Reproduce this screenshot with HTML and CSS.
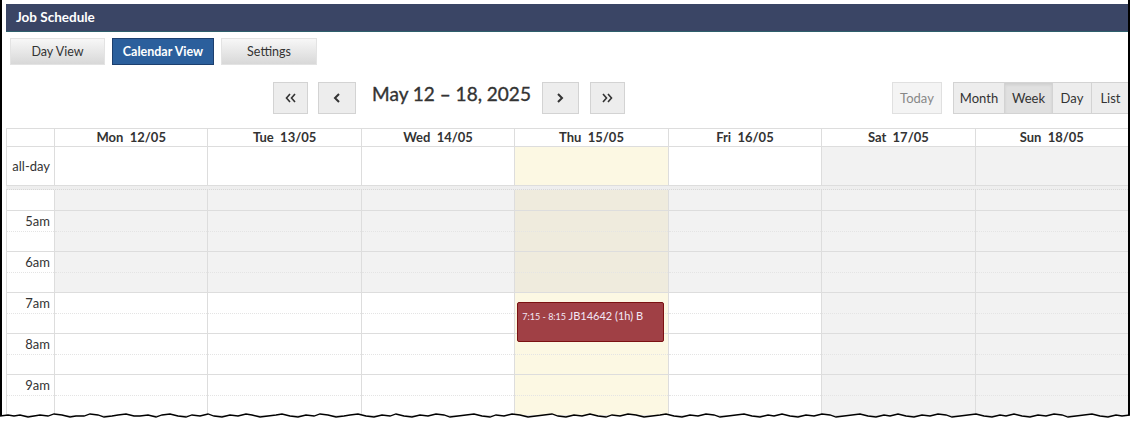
FILE: index.html
```html
<!DOCTYPE html>
<html>
<head>
<meta charset="utf-8">
<title>Job Schedule</title>
<link rel="stylesheet" href="styles.css">
</head>
<body>
<div class="frame">
  <div class="titlebar">Job Schedule</div>
  <div class="tabs">
    <div class="tab tab-day">Day View</div>
    <div class="tab tab-cal active">Calendar View</div>
    <div class="tab tab-set">Settings</div>
  </div>
  <div class="cal">
    <div class="toolbar">
      <div class="chunk"></div>
      <div class="chunk center">
        <div class="btn b-prev2"><svg width="11" height="10" viewBox="0 0 11 10"><polyline points="5,1 1.5,5 5,9" fill="none" stroke="#333" stroke-width="1.6"/><polyline points="10,1 6.5,5 10,9" fill="none" stroke="#333" stroke-width="1.6"/></svg></div>
        <div class="btn b-prev"><svg width="8" height="10" viewBox="0 0 8 10"><polyline points="6,1 2,5 6,9" fill="none" stroke="#333" stroke-width="2"/></svg></div>
        <h2 class="title">May 12 – 18, 2025</h2>
        <div class="btn b-next"><svg width="8" height="10" viewBox="0 0 8 10"><polyline points="2,1 6,5 2,9" fill="none" stroke="#333" stroke-width="2"/></svg></div>
        <div class="btn b-next2"><svg width="11" height="10" viewBox="0 0 11 10"><polyline points="1,1 4.5,5 1,9" fill="none" stroke="#333" stroke-width="1.6"/><polyline points="6,1 9.5,5 6,9" fill="none" stroke="#333" stroke-width="1.6"/></svg></div>
      </div>
      <div class="chunk right">
        <div class="btn b-today">Today</div>
        <div class="group">
          <div class="btn b-month">Month</div>
          <div class="btn b-week active">Week</div>
          <div class="btn b-dayv">Day</div>
          <div class="btn b-list">List</div>
        </div>
      </div>
    </div>

    <div class="grid">
      <div class="row head">
        <div class="cell axis"></div>
        <div class="cell hd">Mon  12/05</div>
        <div class="cell hd">Tue  13/05</div>
        <div class="cell hd">Wed  14/05</div>
        <div class="cell hd">Thu  15/05</div>
        <div class="cell hd">Fri  16/05</div>
        <div class="cell hd">Sat  17/05</div>
        <div class="cell hd">Sun  18/05</div>
      </div>
      <div class="row allday">
        <div class="cell axis ad-label">all-day</div>
        <div class="cell"></div>
        <div class="cell"></div>
        <div class="cell"></div>
        <div class="cell today"></div>
        <div class="cell"></div>
        <div class="cell weekend"></div>
        <div class="cell weekend"></div>
      </div>
      <div class="divider"></div>
      <div class="row body">
        <div class="col axis-col">
          <div class="s s0"></div>
          <div class="s sh"><span>5am</span></div>
          <div class="s sm"></div>
          <div class="s sh"><span>6am</span></div>
          <div class="s sm"></div>
          <div class="s sh"><span>7am</span></div>
          <div class="s sm"></div>
          <div class="s sh"><span>8am</span></div>
          <div class="s sm"></div>
          <div class="s sh"><span>9am</span></div>
          <div class="s sm"></div>
          <div class="s sh"></div>
        </div>
        <div class="col wd"><div class="s s0 nb"></div><div class="s sh nb"></div><div class="s sm nb"></div><div class="s sh nb"></div><div class="s sm nb"></div><div class="s sh"></div><div class="s sm"></div><div class="s sh"></div><div class="s sm"></div><div class="s sh"></div><div class="s sm"></div><div class="s sh"></div></div>
        <div class="col wd"><div class="s s0 nb"></div><div class="s sh nb"></div><div class="s sm nb"></div><div class="s sh nb"></div><div class="s sm nb"></div><div class="s sh"></div><div class="s sm"></div><div class="s sh"></div><div class="s sm"></div><div class="s sh"></div><div class="s sm"></div><div class="s sh"></div></div>
        <div class="col wd"><div class="s s0 nb"></div><div class="s sh nb"></div><div class="s sm nb"></div><div class="s sh nb"></div><div class="s sm nb"></div><div class="s sh"></div><div class="s sm"></div><div class="s sh"></div><div class="s sm"></div><div class="s sh"></div><div class="s sm"></div><div class="s sh"></div></div>
        <div class="col wd today-col"><div class="s s0 nb"></div><div class="s sh nb"></div><div class="s sm nb"></div><div class="s sh nb"></div><div class="s sm nb"></div><div class="s sh"></div><div class="s sm"></div><div class="s sh"></div><div class="s sm"></div><div class="s sh"></div><div class="s sm"></div><div class="s sh"></div>
          <div class="event"><span class="ev-time">7:15 - 8:15</span> JB14642 (1h) B</div>
        </div>
        <div class="col wd"><div class="s s0 nb"></div><div class="s sh nb"></div><div class="s sm nb"></div><div class="s sh nb"></div><div class="s sm nb"></div><div class="s sh"></div><div class="s sm"></div><div class="s sh"></div><div class="s sm"></div><div class="s sh"></div><div class="s sm"></div><div class="s sh"></div></div>
        <div class="col we"><div class="s s0"></div><div class="s sh"></div><div class="s sm"></div><div class="s sh"></div><div class="s sm"></div><div class="s sh"></div><div class="s sm"></div><div class="s sh"></div><div class="s sm"></div><div class="s sh"></div><div class="s sm"></div><div class="s sh"></div></div>
        <div class="col we"><div class="s s0"></div><div class="s sh"></div><div class="s sm"></div><div class="s sh"></div><div class="s sm"></div><div class="s sh"></div><div class="s sm"></div><div class="s sh"></div><div class="s sm"></div><div class="s sh"></div><div class="s sm"></div><div class="s sh"></div></div>
      </div>
    </div>
  </div>
</div>
<svg class="torn" width="1130" height="12" viewBox="0 0 1130 12">
  <path class="torn-fill" d="M0,6 L8,5 L14,6 L20,5 L28,7 L34,6 L40,5 L48,6 L54,4 L62,5 L70,7 L76,6 L84,6 L90,4 L98,5 L104,7 L112,6 L118,5 L126,4 L134,6 L140,6 L148,5 L156,7 L162,5 L170,4 L178,6 L186,7 L192,5 L200,6 L208,4 L214,6 L222,7 L230,5 L238,6 L246,4 L252,5 L260,7 L268,6 L276,5 L282,4 L290,6 L298,7 L306,5 L314,6 L320,4 L328,5 L336,7 L344,6 L350,5 L358,4 L366,6 L374,7 L382,5 L390,6 L396,4 L404,6 L412,7 L420,5 L428,6 L436,4 L444,5 L450,7 L458,6 L466,5 L474,4 L482,6 L490,7 L496,5 L504,6 L512,4 L520,5 L528,7 L536,6 L544,5 L552,4 L558,6 L566,7 L574,5 L582,6 L590,4 L598,6 L606,7 L612,5 L620,6 L628,4 L636,5 L644,7 L652,6 L660,5 L666,4 L674,6 L682,7 L690,5 L698,6 L706,4 L714,5 L720,7 L728,6 L736,5 L744,4 L752,6 L760,7 L768,5 L774,6 L782,4 L790,6 L798,7 L806,5 L814,6 L822,4 L830,5 L836,7 L844,6 L852,5 L860,4 L868,6 L876,7 L884,5 L890,6 L898,4 L906,6 L914,7 L922,5 L930,6 L938,4 L946,5 L952,7 L960,6 L968,5 L976,4 L984,6 L992,7 L1000,5 L1006,6 L1014,4 L1022,6 L1030,7 L1038,5 L1046,6 L1054,4 L1062,5 L1068,7 L1076,6 L1084,5 L1092,4 L1100,6 L1108,7 L1116,5 L1122,6 L1130,5 L1130,12 L0,12 Z"/>
  <path class="torn-line" d="M0,6 L8,5 L14,6 L20,5 L28,7 L34,6 L40,5 L48,6 L54,4 L62,5 L70,7 L76,6 L84,6 L90,4 L98,5 L104,7 L112,6 L118,5 L126,4 L134,6 L140,6 L148,5 L156,7 L162,5 L170,4 L178,6 L186,7 L192,5 L200,6 L208,4 L214,6 L222,7 L230,5 L238,6 L246,4 L252,5 L260,7 L268,6 L276,5 L282,4 L290,6 L298,7 L306,5 L314,6 L320,4 L328,5 L336,7 L344,6 L350,5 L358,4 L366,6 L374,7 L382,5 L390,6 L396,4 L404,6 L412,7 L420,5 L428,6 L436,4 L444,5 L450,7 L458,6 L466,5 L474,4 L482,6 L490,7 L496,5 L504,6 L512,4 L520,5 L528,7 L536,6 L544,5 L552,4 L558,6 L566,7 L574,5 L582,6 L590,4 L598,6 L606,7 L612,5 L620,6 L628,4 L636,5 L644,7 L652,6 L660,5 L666,4 L674,6 L682,7 L690,5 L698,6 L706,4 L714,5 L720,7 L728,6 L736,5 L744,4 L752,6 L760,7 L768,5 L774,6 L782,4 L790,6 L798,7 L806,5 L814,6 L822,4 L830,5 L836,7 L844,6 L852,5 L860,4 L868,6 L876,7 L884,5 L890,6 L898,4 L906,6 L914,7 L922,5 L930,6 L938,4 L946,5 L952,7 L960,6 L968,5 L976,4 L984,6 L992,7 L1000,5 L1006,6 L1014,4 L1022,6 L1030,7 L1038,5 L1046,6 L1054,4 L1062,5 L1068,7 L1076,6 L1084,5 L1092,4 L1100,6 L1108,7 L1116,5 L1122,6 L1130,5"/>
</svg>
</body>
</html>
```

FILE: styles.css
```css
html, body {
  margin: 0;
  padding: 0;
  background: #fff;
}
body {
  font-family: Lato, "Open Sans", "Liberation Sans", sans-serif;
  color: #333;
  width: 1130px;
  height: 422px;
  overflow: hidden;
  position: relative;
}
.frame {
  box-sizing: border-box;
  width: 1130px;
  height: 422px;
  border-left: 2px solid #000;
  border-right: 2px solid #000;
  padding: 4px 0 0 4px;
  overflow: hidden;
}
.titlebar {
  height: 27px;
  line-height: 27px;
  border-bottom: 1px solid #2e5f6c;
  background: #3a4565;
  color: #fff;
  font-weight: 700;
  font-size: 13.5px;
  padding-left: 10px;
}
.tabs {
  display: flex;
  gap: 7px;
  margin: 6px 0 0 4px;
}
.tab {
  box-sizing: border-box;
  height: 27px;
  border: 1px solid #e3e3e3;
  background: linear-gradient(#f7f7f7, #d8d8d8);
  font-size: 12.5px;
  color: #333;
  display: flex;
  align-items: center;
  justify-content: center;
}
.tab-day { width: 95px; }
.tab-cal { width: 102px; }
.tab-set { width: 96px; }
.tab.active {
  background: #2b5f9c;
  border-color: #1c3f6e;
  color: #fff;
  font-weight: 700;
}

.toolbar {
  margin-top: 17px;
  margin-right: -2px;
  height: 32px;
  display: flex;
  justify-content: space-between;
  align-items: center;
}
.chunk {
  display: flex;
  align-items: center;
}
.btn {
  box-sizing: border-box;
  height: 32px;
  border: 1px solid #d3d3d3;
  background: #ededed;
  display: flex;
  align-items: center;
  justify-content: center;
  font-size: 13px;
  color: #333;
}
.b-prev2 { width: 35px; }
.b-prev { width: 38px; margin-left: 10px; }
.b-next { width: 37px; }
.b-next2 { width: 35px; margin-left: 11px; }
.title {
  margin: 0 11px 0 16px;
  font-size: 19px;
  font-weight: 400;
  line-height: 24px;
  align-self: flex-start;
  color: #333;
  white-space: nowrap;
  -webkit-text-stroke: 0.35px #333;
}
.b-today {
  width: 50px;
  background: #f4f4f4;
  border-color: #e0e0e0;
  color: #888;
  margin-right: 11px;
}
.group {
  display: flex;
}
.group .btn + .btn { border-left: none; }
.b-month { width: 52px; }
.b-week { width: 48px; }
.b-dayv { width: 39px; }
.b-list { width: 38px; }
.btn.active {
  background: #e0e0e0;
  box-shadow: inset 0 2px 3px rgba(0,0,0,0.08);
}

.grid {
  margin-top: 14px;
  border-top: 1px solid #ddd;
}
.row {
  display: grid;
  grid-template-columns: 48px repeat(7, 1fr);
}
.cell {
  box-sizing: border-box;
  border-left: 1px solid #ddd;
}
.head {
  border-bottom: 1px solid #ddd;
}
.hd {
  height: 17px;
  line-height: 17px;
  text-align: center;
  font-size: 13px;
  font-weight: 700;
  white-space: pre;
}
.allday .cell {
  height: 38px;
}
.ad-label {
  font-size: 13px;
  text-align: right;
  padding-right: 4px;
  line-height: 38px;
}
.allday .today { background: #fcf8e3; }
.allday .weekend { background: #f2f2f2; }
.divider {
  height: 3px;
  border-top: 1px solid #ddd;
  border-bottom: 1px dotted #d8d8d8;
  background: #eeeeee;
}
.col {
  border-left: 1px solid #ddd;
  position: relative;
}
.s0 { height: 20px; }
.sh { height: 20px; border-top: 1px solid #ddd; }
.sm { height: 19px; border-top: 1px dotted #e4e4e4; }
.axis-col .sh {
  font-size: 13px;
  text-align: right;
  padding-right: 4px;
  line-height: 20px;
}
.wd .nb { background: #f2f2f2; }
.we .s { background: #f2f2f2; }
.today-col .s { background: #fcf8e3; }
.today-col .nb { background: #efebdd; }
.event {
  position: absolute;
  top: 112px;
  left: 2px;
  right: 4px;
  height: 40px;
  box-sizing: border-box;
  border: 1px solid #7b1111;
  border-radius: 2px;
  background: #a04045;
  color: #f2e8f6;
  font-size: 11px;
  line-height: 14px;
  padding: 6px 4px;
  white-space: nowrap;
  overflow: hidden;
}
.ev-time {
  font-size: 9px;
}
.torn {
  position: absolute;
  left: 0;
  bottom: 0;
}
.torn-fill {
  fill: #fff;
}
.torn-line {
  fill: none;
  stroke: #000;
  stroke-width: 1.3;
}
```
